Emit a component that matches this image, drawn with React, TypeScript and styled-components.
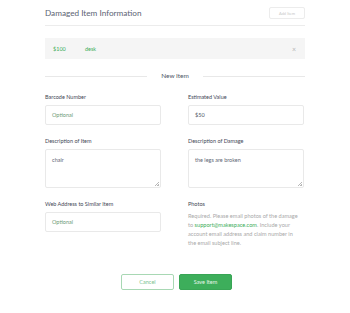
import styled, { createGlobalStyle } from "styled-components";

const GlobalStyle = createGlobalStyle`
  html, body {
    margin: 0;
    padding: 0;
    background: #ffffff;
    font-family: "Lato", "Open Sans", sans-serif;
  }
  * { box-sizing: border-box; }
`;

const green = "#3dae5b";

const Page = styled.div`
  width: 260px;
  margin: 0 45px;
  padding-top: 7px;
`;

const HeaderWrap = styled.div`
  border-bottom: 1px solid #ececec;
  padding-bottom: 6px;
  display: flex;
  align-items: center;
  justify-content: space-between;
`;

const Title = styled.h1`
  margin: 0;
  font-size: 8.2px;
  font-weight: 400;
  color: #5b6372;
  letter-spacing: 0;
`;

const AddButton = styled.button`
  width: 36px;
  height: 12px;
  padding: 0;
  border: 1px solid #ececec;
  border-radius: 2px;
  background: #fff;
  color: #c8c8c8;
  font-family: inherit;
  font-size: 4px;
`;

const ItemRow = styled.div`
  margin-top: 12px;
  height: 21px;
  background: #f5f5f5;
  display: flex;
  align-items: center;
  padding: 0 8px;
  font-size: 5.5px;
  color: ${green};
`;

const Price = styled.span`
  width: 32px;
`;

const ItemName = styled.span`
  flex: 1;
`;

const Close = styled.span`
  color: #b5b5b5;
  font-size: 7px;
  margin-right: 1px;
`;

const SectionDivider = styled.div`
  margin-top: 13px;
  display: flex;
  align-items: center;
  gap: 14px;
  &::before,
  &::after {
    content: "";
    flex: 1;
    height: 1px;
    background: #e8e8e8;
  }
`;

const SectionTitle = styled.span`
  font-size: 6.5px;
  color: #4e5666;
  padding-bottom: 2px;
`;

const Grid = styled.div`
  margin-top: 13px;
  display: grid;
  grid-template-columns: 116px 116px;
  column-gap: 27px;
  row-gap: 13px;
`;

const Field = styled.div`
  display: flex;
  flex-direction: column;
`;

const Label = styled.label`
  font-size: 5.5px;
  color: #3f4756;
  margin-bottom: 4px;
  line-height: 7px;
`;

const Input = styled.div<{ $placeholder?: boolean }>`
  height: 20px;
  border: 1px solid #e9e9e9;
  border-radius: 2px;
  padding: 0 6px;
  display: flex;
  align-items: center;
  font-size: 5.5px;
  color: ${({ $placeholder }) => ($placeholder ? "#6e9a77" : "#4e5666")};
  background: #fff;
`;

const TextArea = styled.div`
  position: relative;
  height: 39px;
  border: 1px solid #e9e9e9;
  border-radius: 2px;
  padding: 7px 6px;
  font-size: 5.5px;
  color: #5e6675;
  background: #fff;
`;

const Grip = styled.span`
  position: absolute;
  right: 1px;
  bottom: 1px;
  width: 4px;
  height: 4px;
  background: linear-gradient(135deg, transparent 45%, #b8b8b8 45%, #b8b8b8 55%, transparent 55%, transparent 75%, #b8b8b8 75%);
`;

const Help = styled.p`
  margin: 0;
  font-size: 5.6px;
  line-height: 9px;
  color: #a9a9a9;
  margin-top: -1px;
  white-space: nowrap;
`;

const Mail = styled.span`
  color: ${green};
`;

const Actions = styled.div`
  margin-top: 27px;
  display: flex;
  justify-content: center;
  gap: 5px;
  padding-left: 3px;
`;

const ActionButton = styled.button<{ $primary?: boolean }>`
  width: 53px;
  height: 16px;
  padding: 0;
  border-radius: 2px;
  font-family: inherit;
  font-size: 5.5px;
  border: 1px solid ${({ $primary }) => ($primary ? "#38a555" : "#a8d8b4")};
  background: ${({ $primary }) => ($primary ? green : "#fff")};
  color: ${({ $primary }) => ($primary ? "#e6f5ea" : "#7cc291")};
`;

export default function App() {
  return (
    <>
      <GlobalStyle />
      <Page>
        <HeaderWrap>
          <Title>Damaged Item Information</Title>
          <AddButton>Add Item</AddButton>
        </HeaderWrap>
        <ItemRow>
          <Price>$100</Price>
          <ItemName>desk</ItemName>
          <Close>×</Close>
        </ItemRow>
        <SectionDivider>
          <SectionTitle>New Item</SectionTitle>
        </SectionDivider>
        <Grid>
          <Field>
            <Label>Barcode Number</Label>
            <Input $placeholder>Optional</Input>
          </Field>
          <Field>
            <Label>Estimated Value</Label>
            <Input>$50</Input>
          </Field>
          <Field>
            <Label>Description of Item</Label>
            <TextArea>
              chair
              <Grip />
            </TextArea>
          </Field>
          <Field>
            <Label>Description of Damage</Label>
            <TextArea>
              the legs are broken
              <Grip />
            </TextArea>
          </Field>
          <Field>
            <Label>Web Address to Similar Item</Label>
            <Input $placeholder>Optional</Input>
          </Field>
          <Field>
            <Label>Photos</Label>
            <Help>
              Required. Please email photos of the damage
              <br />
              to <Mail>support@makespace.com</Mail>. Include your
              <br />
              account email address and claim number in
              <br />
              the email subject line.
            </Help>
          </Field>
        </Grid>
        <Actions>
          <ActionButton>Cancel</ActionButton>
          <ActionButton $primary>Save Item</ActionButton>
        </Actions>
      </Page>
    </>
  );
}
